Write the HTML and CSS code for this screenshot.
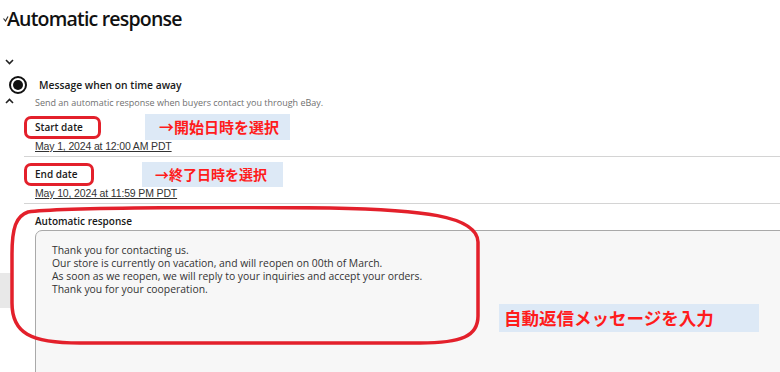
FILE: index.html
```html
<!DOCTYPE html>
<html lang="ja">
<head>
    <meta charset="UTF-8" />
    <meta name="viewport" content="width=device-width, initial-scale=1" />
    <title>Automatic response</title>
    <link rel="stylesheet" href="styles.css">
</head>
<body>
    <div class="page">
        <h1 class="title"><svg class="tick" width="6" height="6" viewBox="0 0 6 6"><path d="M0.5 2.5 L2.5 5 L5 0.5" fill="none" stroke="#333" stroke-width="1.2"/></svg>Automatic response</h1>

        <div class="chev-row">
            <svg width="9" height="6" viewBox="0 0 9 6"><path d="M1 1 L4.5 4.5 L8 1" fill="none" stroke="#222" stroke-width="1.6"/></svg>
        </div>

        <!-- away option -->
        <div class="option-row">
            <span class="radio"><span class="radio-dot"></span></span>
            <span class="option-label">Message when on time away</span>
        </div>
        <div class="desc-row">
            <svg width="9" height="6" viewBox="0 0 9 6"><path d="M1 5 L4.5 1.5 L8 5" fill="none" stroke="#222" stroke-width="1.6"/></svg>
            <span class="desc">Send an automatic response when buyers contact you through eBay.</span>
        </div>

        <!-- start date -->
        <div class="field">
            <div class="field-head">
                <span class="field-label">Start date</span>
                <span class="note note-start">→開始日時を選択</span>
            </div>
            <a class="date-link">May 1, 2024 at 12:00 AM PDT</a>
        </div>

        <!-- end date -->
        <div class="field">
            <div class="field-head">
                <span class="field-label end">End date</span>
                <span class="note note-end">→終了日時を選択</span>
            </div>
            <a class="date-link">May 10, 2024 at 11:59 PM PDT</a>
        </div>

        <!-- message -->
        <div class="message">
            <div class="gutter"><div class="gutter-block"></div></div>
            <div class="message-body">
                <div class="message-label">Automatic response</div>
                <div class="textbox">
                    <p>Thank you for contacting us.<br>
                    Our store is currently on vacation, and will reopen on 00th of March.<br>
                    As soon as we reopen, we will reply to your inquiries and accept your orders.<br>
                    Thank you for your cooperation.</p>
                    <span class="note note-msg">自動返信メッセージを入力</span>
                </div>
            </div>
            <svg class="ring" width="480" height="145" viewBox="0 0 480 145"><path d="M28 6 C60 1, 250 1, 330 2 C420 4, 477 9, 478 36 L478 110 C478 130, 462 137, 420 137 L80 137 C30 137, 12 127, 12 97 L12 48 C12 22, 16 10, 28 6 Z" fill="none" stroke="#e3202b" stroke-width="3.5"/></svg>
        </div>
    </div>
</body>
</html>
```

FILE: styles.css
```css
body {
    margin: 0;
    background-color: #ffffff;
    font-family: 'Open Sans', 'Noto Sans', sans-serif;
    color: #191919;
    overflow: hidden;
}
.page {
    width: 780px;
    height: 372px;
    overflow: hidden;
}
.title {
    position: relative;
    margin: 0;
    padding: 6px 0 0 7px;
    font-size: 19.5px;
    line-height: 26px;
    font-weight: 600;
    letter-spacing: -0.8px;
    color: #111;
}
.tick {
    position: absolute;
    left: 3px;
    top: 16px;
}
.chev-row {
    height: 8px;
    padding: 27px 0 0 5px;
}
.chev-row svg {
    display: block;
}
.option-row {
    display: flex;
    align-items: center;
    margin-top: 9px;
    padding-left: 9px;
    height: 18px;
}
.radio {
    width: 14px;
    height: 14px;
    border: 2px solid #111;
    border-radius: 50%;
    display: flex;
    align-items: center;
    justify-content: center;
}
.radio-dot {
    width: 10px;
    height: 10px;
    background-color: #111;
    border-radius: 50%;
}
.option-label {
    margin-left: 12px;
    font-size: 10.3px;
    font-weight: 600;
}
.desc-row {
    display: flex;
    align-items: center;
    height: 12px;
    margin-top: 2px;
    padding-left: 5px;
}
.desc-row svg {
    margin-top: -2px;
}
.desc {
    margin-left: 21px;
    font-size: 9px;
    color: #707070;
}
.field {
    margin-left: 24px;
    margin-top: 6px;
    border-bottom: 1px solid #d4d4d4;
    padding-bottom: 4px;
}
.field + .field {
    margin-top: 4px;
}
.field-head {
    display: flex;
    align-items: center;
    height: 26px;
}
.field-label {
    box-sizing: border-box;
    width: 77px;
    height: 23px;
    border: 3px solid #e3202b;
    border-radius: 7px;
    padding-left: 8px;
    font-size: 10px;
    font-weight: 600;
    line-height: 17px;
}
.field-label.end {
    width: 70px;
}
.note {
    background-color: #dde9f6;
    color: #ff1c1c;
    font-family: 'Noto Sans CJK JP', sans-serif;
    font-weight: 700;
}
.note-start {
    margin-left: 44px;
    width: 131px;
    height: 26px;
    padding-left: 14px;
    font-size: 15px;
    line-height: 26px;
}
.note-end {
    margin-left: 48px;
    width: 128px;
    height: 25px;
    padding-left: 13px;
    font-size: 14px;
    line-height: 25px;
}
.date-link {
    display: block;
    margin-left: 11px;
    font-family: 'Liberation Sans', Arial, sans-serif;
    font-size: 10.5px;
    letter-spacing: -0.15px;
    line-height: 12px;
    color: #333;
    text-decoration: underline;
}
.message {
    position: relative;
    display: flex;
}
.gutter {
    width: 35px;
    flex-shrink: 0;
}
.gutter-block {
    width: 12px;
    height: 35px;
    margin-top: 69px;
    background-color: #e8e8e8;
}
.message-body {
    flex: 1;
}
.message-label {
    margin-top: 10px;
    height: 16px;
    font-size: 10px;
    font-weight: 600;
    line-height: 14px;
}
.textbox {
    box-sizing: border-box;
    width: 760px;
    height: 160px;
    border: 1px solid #a9a9a9;
    border-radius: 7px;
    background-color: #f7f7f7;
    padding: 13px 0 0 16px;
}
.textbox p {
    margin: 0;
    font-size: 10.4px;
    line-height: 13px;
    color: #333;
}
.note-msg {
    display: block;
    margin-left: 447px;
    margin-top: 8px;
    width: 255px;
    height: 28px;
    padding-left: 5px;
    font-size: 17.5px;
    line-height: 28px;
}
.ring {
    position: absolute;
    left: 0;
    top: 2px;
}
```
